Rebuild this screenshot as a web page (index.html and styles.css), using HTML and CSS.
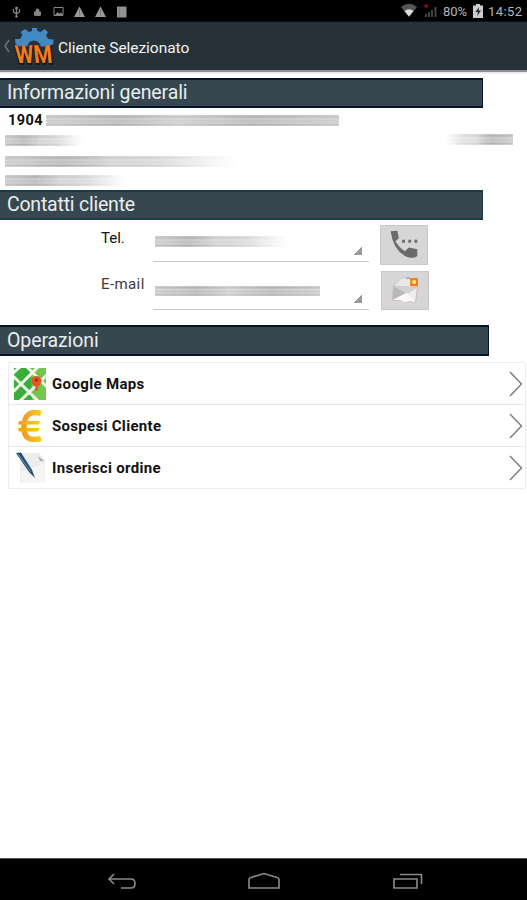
FILE: index.html
```html
<!DOCTYPE html>
<html lang="it">
<head>
<meta charset="utf-8">
<title>Cliente Selezionato</title>
<link rel="stylesheet" href="styles.css">
</head>
<body>
<div class="screen">
  <div class="status">
    <svg class="notifications" viewBox="0 0 132 22" fill="none" stroke="#858585">
      <path d="M16.500 8v9M13.500 9v3l3 2 3-2V9" stroke-width="1.300"/><circle cx="16.500" cy="8" r="1.500" fill="#858585" stroke="none"/><circle cx="16.500" cy="16.500" r="1.200" fill="#858585" stroke="none"/>
      <path d="M34 11.500h7v3q0 1.500-1.500 1.500h-4Q34 16 34 14.500zM35.500 11.500q0-3 2-3t2 3z" fill="#858585" stroke="none"/>
      <path d="M54 7.500h9v8h-9z"/><path d="M55 15l2.500-3 2 1.500 2-1 1.500 2.500z" fill="#858585" stroke="none"/>
      <path d="M79.500 6.500l5.500 10.500H74zM100.500 6.500L106 17H95z" fill="#999" stroke="none"/>
      <path d="M79.500 10v3.500M79.500 14.500v1M100.500 10v3.500M100.500 14.500v1" stroke="#707070"/>
      <path d="M117 6.500h9.500V17.500H117z" fill="#929292" stroke="none"/><path d="M119.500 7v10" stroke="#707070" stroke-width=".6"/>
    </svg>
    <div class="system">
      <svg class="signals" viewBox="0 0 38 22">
        <path d="M0 7Q8 .5 16 7l-8 10z" fill="#555"/><path d="M3.500 11Q8 7.500 12.500 11L8 16.500z" fill="#ddd"/>
        <path d="M24 17v-3h2v3zM27 17v-5h2v5zM30 17v-7h2v7zM33.500 17V7h2v10z" fill="#444"/><circle cx="25" cy="6" r="1.700" fill="#b00d0d"/>
      </svg>
      <span class="percent">80%</span>
      <svg class="battery" viewBox="0 0 10 14"><path d="M3 0h4v1.500h3V14H0V1.500h3z" fill="#ccc"/><path d="M6 3L2.500 8H5l-1 4 4-5.500H5.500z" fill="#222"/></svg>
      <span class="clock">14:52</span>
    </div>
  </div>

  <header class="appbar">
    <svg class="back" viewBox="0 0 8 14"><path d="M6 1L2 7l4 6" fill="none" stroke="#66727a" stroke-width="1.600"/></svg>
    <svg class="logo" viewBox="0 0 40 38">
      <path d="M1.500 17l-.5-5 5 0 2.500-4-2-3 4.500-3 4 3 3-1V1h5l.5 3 3 1 4-3 3.500 3-2 4 2.500 3 5 .5 0 4-4 3H27q-2-6-7-6t-7 6H6z" fill="#4389c2"/>
      <g transform="translate(1 36) skewX(6)">
        <text class="logo-shadow" x="1" y="1" textLength="38" lengthAdjust="spacingAndGlyphs">WM</text>
        <text class="logo-text" x="1" y="0" textLength="37" lengthAdjust="spacingAndGlyphs">WM</text>
      </g>
    </svg>
    <h1>Cliente Selezionato</h1>
  </header>

  <main>
    <h2 class="section"><span class="t-info">Informazioni generali</span></h2>
    <div class="info">
      <div class="line first"><b>1904</b><i class="smear solid s-name"></i></div>
      <div class="line second"><i class="smear s-a"></i><i class="smear left s-b"></i></div>
      <div class="line third"><i class="smear s-c"></i></div>
      <div class="line fourth"><i class="smear s-d"></i></div>
    </div>

    <h2 class="section light"><span class="t-contact">Contatti cliente</span></h2>
    <div class="contacts">
      <div class="contact tel">
        <label>Tel.</label>
        <div class="spinner"><i class="smear s-tel"></i></div>
        <button aria-label="Tel."><svg viewBox="0 0 48 40"><path d="M10 5.500l7-.5 1.500 8-3.500 3q4 7 10 10.500l4-4 9 2v7q-5 4-13 0Q12 24 10 5.500z" fill="#6b6b6b"/><path d="M22 14.500h3v3h-3zM28.500 14.500h3v3h-3zM35 14.500h3v3h-3z" fill="#6b6b6b"/></svg></button>
      </div>
      <div class="contact mail">
        <label>E-mail</label>
        <div class="spinner"><i class="smear solid s-mail"></i></div>
        <button aria-label="E-mail"><svg viewBox="0 0 48 39">
          <path d="M12 15l7-8q8-5 17 5l1 7-12 3z" fill="#e8e8e8" stroke="#c4c4c4" stroke-width=".7"/>
          <path d="M12 14.500l25 1.500-2 15-6-1-5 1.500-6-3-7 1z" fill="#eee" stroke="#cfaaaa" stroke-width=".8"/>
          <path d="M12 14.500L27 22l-16 7z" fill="#b9b9b9"/><path d="M12 14.500L27 22l10-6z" fill="#d2d2d2"/><path d="M11 29l15-8 9 10-6-1-5 1.500-6-3z" fill="#f8f8f8"/>
          <path d="M25 7q3-3 6 1" fill="none" stroke="#888"/>
          <path d="M29.500 6h8v8.500h-8z" fill="#ee7b20"/><circle cx="33.500" cy="10.200" r="2.200" fill="#ffe95c"/>
        </svg></button>
      </div>
    </div>

    <h2 class="section wide"><span class="t-ops">Operazioni</span></h2>
    <ul class="ops">
      <li>
        <svg class="icon" viewBox="0 0 32 32"><path d="M0 0h32v32H0z" fill="#38ad3c"/><path d="M17 0h15v32H18z" fill="#71c64e"/><path d="M-2 6L7-2M-2 7l27 27M25-2L-2 25M5 34L34 6M12-2l22 22" fill="none" stroke="#f1f5e9" stroke-width="3"/><path d="M17.500 13a5 5 0 0 1 10 0q0 3-4 6v4h-2v-4q-4-3-4-6z" fill="#e65525"/><circle cx="22.500" cy="12" r="1.600" fill="#963015"/></svg>
        <span class="l-maps">Google Maps</span>
        <svg class="chevron" viewBox="0 0 14 26"><path d="M1 1l11.500 12L1 25" fill="none" stroke="#808080" stroke-width="1.500"/></svg>
      </li>
      <li>
        <svg class="icon" viewBox="0 0 32 32"><defs><linearGradient id="gold" x1="0" x2="1"><stop stop-color="#f39a28"/><stop offset="1" stop-color="#f5cf1c"/></linearGradient></defs><path d="M27 3.500Q11-1 10 16t17 12.500" fill="none" stroke="url(#gold)" stroke-width="5.500"/><path d="M5 11h21l-1 3.500H4zM4 18h22l-2 3.500H5z" fill="url(#gold)"/></svg>
        <span class="l-due">Sospesi Cliente</span>
        <svg class="chevron" viewBox="0 0 14 26"><path d="M1 1l11.500 12L1 25" fill="none" stroke="#808080" stroke-width="1.500"/></svg>
      </li>
      <li>
        <svg class="icon" viewBox="0 0 32 32"><path d="M6 1h19l6 7v23H6z" fill="#ededee"/><path d="M7 20L31 11v20H7z" fill="#f5f5f5"/><path d="M24 4l6 5h-4z" fill="#aaa"/><path d="M2 1l5-.5L18 18l3 8-6-6z" fill="#234f77"/><path d="M4 2l13 18" stroke="#6490b5" stroke-width="1"/></svg>
        <span class="l-order">Inserisci ordine</span>
        <svg class="chevron" viewBox="0 0 14 26"><path d="M1 1l11.500 12L1 25" fill="none" stroke="#808080" stroke-width="1.500"/></svg>
      </li>
    </ul>
  </main>

  <nav class="navbar">
    <svg viewBox="0 0 30 18"><path d="M7 2L2 7l5 5M2 7h22q4 0 4 4.500T24 16H14" /></svg>
    <svg class="home" viewBox="0 0 34 18"><path d="M2 16V7.500Q2 6 4 5.500L17 1.500l13 4q2 .5 2 2V16z"/></svg>
    <svg class="recent" viewBox="0 0 32 18"><path d="M2 7h23v9H2zM8 2.500h21.500V12"/></svg>
  </nav>
</div>
</body>
</html>
```

FILE: styles.css
```css
* { box-sizing: border-box; }
body { margin: 0; background: #fff; font-family: Roboto, sans-serif; color: #111; }
svg { display: block; flex: none; }
h1, h2, ul { margin: 0; padding: 0; font-weight: 400; }
.screen { width: 527px; height: 900px; display: flex; flex-direction: column; overflow: hidden; }

.status { height: 22px; flex: none; background: #000; display: flex; justify-content: space-between; }
.notifications { width: 132px; height: 22px; }
.system { display: flex; align-items: center; padding-right: 4px; color: #b6b6b6; font-size: 13px; line-height: 22px; }
.signals { width: 38px; height: 22px; margin-right: 4px; }
.percent { width: 27px; padding-top: 1px; }
.battery { width: 10px; height: 14px; margin: 0 5px 0 3px; }
.clock { width: 35px; padding-top: 1px; letter-spacing: .4px; }

.appbar { height: 50px; flex: none; background: #263238; border-bottom: 2px solid #8b9194; display: flex; align-items: center; padding-left: 3px; box-shadow: 0 1px 2px #ddd; }
.back { width: 8px; height: 14px; margin-top: -1px; }
.logo { width: 40px; height: 38px; margin-left: 3px; overflow: visible; }
.logo text { font-family: Roboto, sans-serif; font-weight: 700; font-size: 25px; }
.logo-shadow { fill: #10171b; stroke: #10171b; stroke-width: 1.5px; }
.logo-text { fill: #f47b20; }
.appbar h1 { margin-left: 4px; color: #f2f2f2; font-size: 15.5px; letter-spacing: -.04px; line-height: 20px; padding-top: 3px; }

main { flex: 1; padding-top: 6px; }
.section { width: 483px; height: 30px; background: #37474f; border: solid #071426; border-width: 2px 1px 2px 0; padding-left: 7px; color: #e9eef1; font-size: 19.5px; line-height: 25px; }
.section.light { border-color: #1d3a42; }
.section.wide { width: 489px; height: 31px; line-height: 27px; }
.t-info { letter-spacing: -.12px; }
.t-contact { letter-spacing: -.22px; }
.t-ops { letter-spacing: -.1px; }

.info { height: 82px; padding: 3px 14px 0 5px; }
.line { display: flex; align-items: center; height: 20px; }
.line b { width: 41px; padding: 2px 0 0 3px; font-size: 14.5px; letter-spacing: .4px; line-height: 18px; }
.first { height: 18px; }
.second { justify-content: space-between; height: 23px; }
.third { height: 18px; }
.fourth { height: 21px; }

.smear { display: block; height: 11px; background: linear-gradient(97deg, rgba(255,255,255,.25), transparent 25%, rgba(255,255,255,.3) 45%, transparent 70%, rgba(255,255,255,.25)), linear-gradient(#c4c4c4, #b0b0b0 18%, #cecece 36%, #bcbcbc 55%, #ccc 72%, #aeaeae 88%, #ccc); -webkit-mask-image: linear-gradient(90deg, #000 40%, transparent); mask-image: linear-gradient(90deg, #000 40%, transparent); }
.smear.solid { -webkit-mask-image: none; mask-image: none; }
.smear.left { -webkit-mask-image: linear-gradient(270deg, #000 40%, transparent); mask-image: linear-gradient(270deg, #000 40%, transparent); }
.s-name { width: 293px; }
.s-a { width: 78px; }
.s-b { width: 68px; margin-top: -3px; }
.s-c { width: 233px; }
.s-d { width: 122px; }

.contacts { height: 105px; padding: 5px 0 0 101px; }
.contact { display: flex; }
.tel { height: 46px; }
.contact label { width: 52px; font-size: 15px; line-height: 18px; padding-top: 4px; }
.mail label { color: #3b3b3b; letter-spacing: .4px; }
.spinner { width: 216px; height: 37px; border-bottom: 1px solid #c9c9c9; padding: 11px 0 0 2px; background: linear-gradient(135deg, transparent 50%, #999 50%) 201px 22px / 8px 8px no-repeat; }
.s-tel { width: 134px; }
.mail .spinner { height: 39px; padding-top: 15px; background-position: 201px 24px; }
.s-mail { width: 165px; height: 10px; }
.contact button { width: 48px; height: 40px; margin-left: 11px; padding: 0; border: 1px solid #c9c9c9; background: #d6d6d6; }
.contact button svg { width: 46px; height: 38px; }
.mail button { height: 39px; margin-left: 12px; }

.ops { list-style: none; margin: 6px 1px 0 8px; border: 1px solid #ececec; border-radius: 2px; }
.ops li { height: 42px; display: flex; align-items: center; padding: 0 2px 0 5px; border-bottom: 1px solid #e8e8e8; }
.ops li:last-child { height: 41px; border-bottom: 0; }
.icon { width: 32px; height: 32px; overflow: hidden; }
.ops span { flex: 1; padding: 0 0 0 6px; font-size: 15px; font-weight: 700; line-height: 20px; letter-spacing: .3px; }
.ops .l-maps { letter-spacing: .35px; }
.chevron { width: 14px; height: 26px; }

.navbar { height: 42px; flex: none; background: #000; border-top: 1px solid #555; display: flex; align-items: center; padding: 3px 0 0 107px; }
.navbar svg { width: 30px; height: 18px; fill: none; stroke: #8b8b8b; stroke-width: 1.6px; }
.navbar .home { width: 34px; margin-left: 110px; }
.navbar .recent { width: 32px; margin-left: 111px; }
```
